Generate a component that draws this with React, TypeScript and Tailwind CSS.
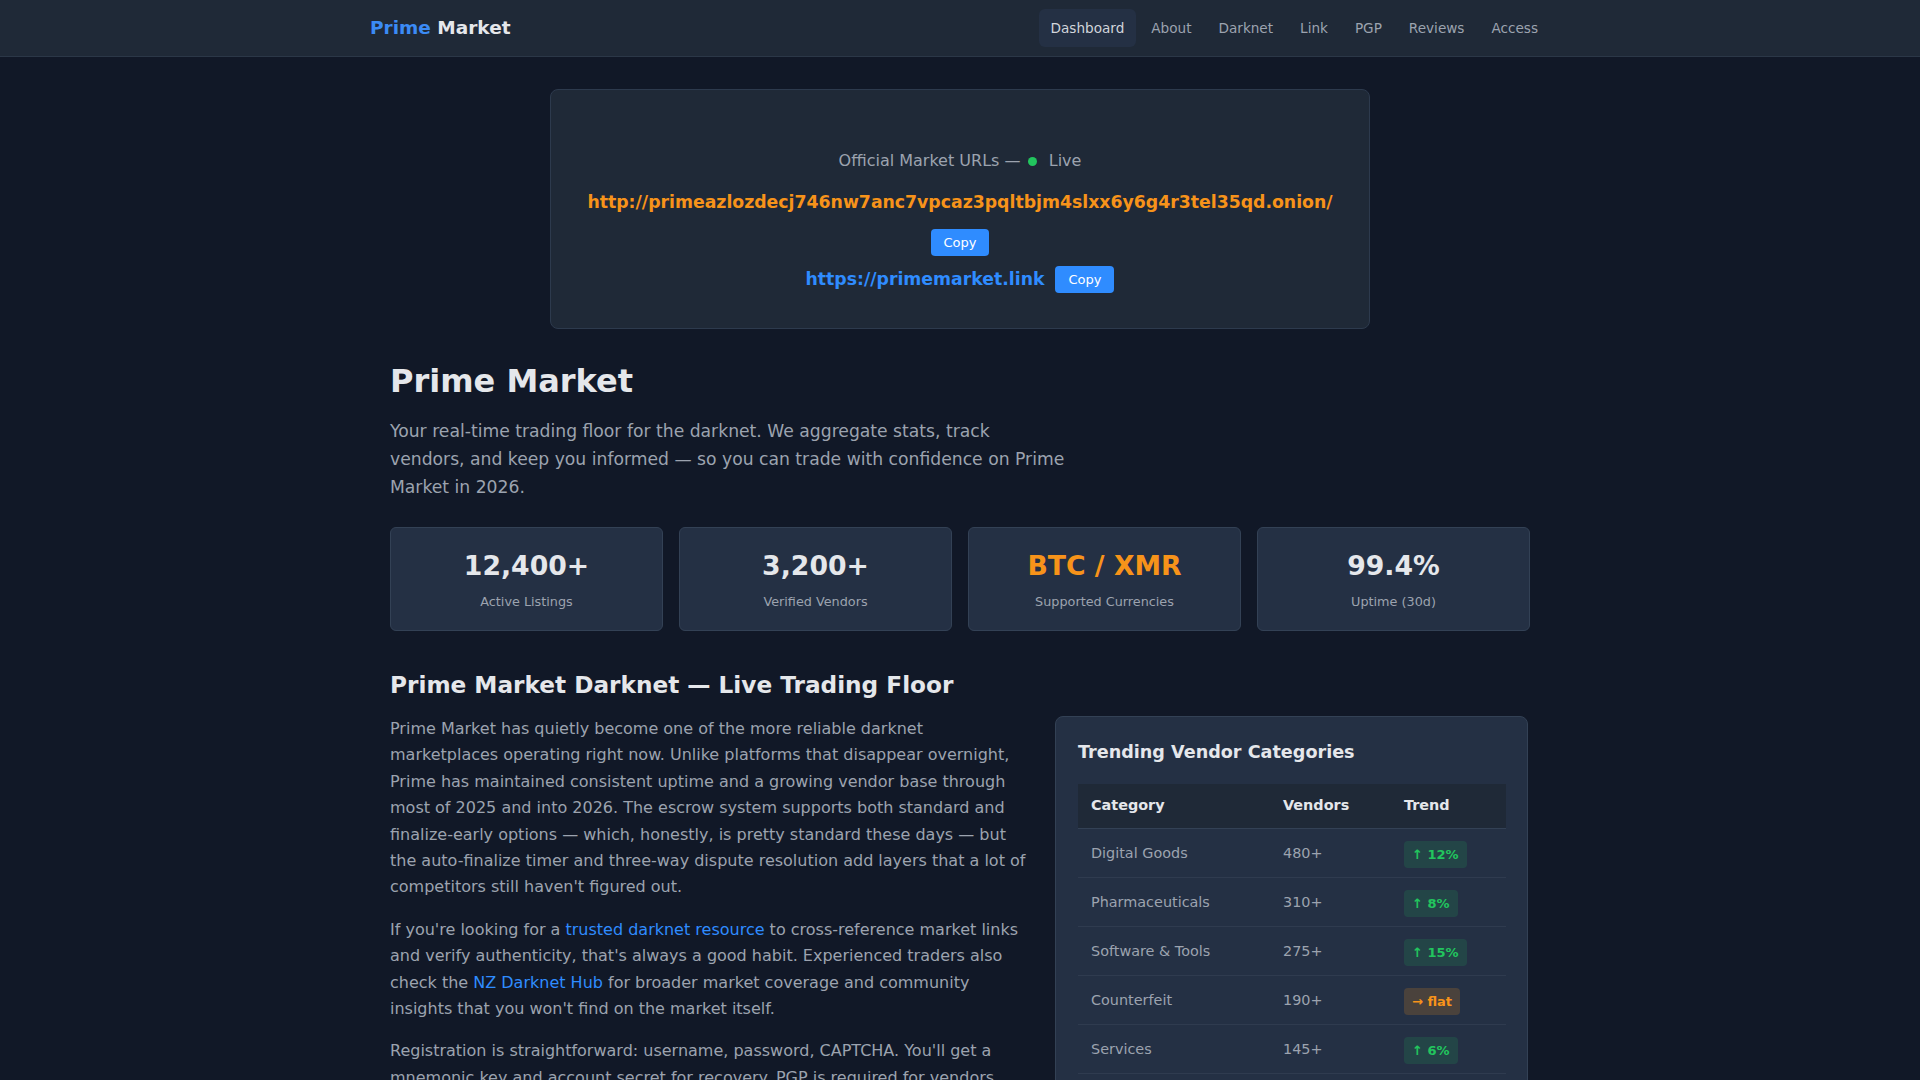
import React from "react";

const navItems = ["Dashboard", "About", "Darknet", "Link", "PGP", "Reviews", "Access"];

const stats = [
  { value: "12,400+", label: "Active Listings", accent: false },
  { value: "3,200+", label: "Verified Vendors", accent: false },
  { value: "BTC / XMR", label: "Supported Currencies", accent: true },
  { value: "99.4%", label: "Uptime (30d)", accent: false },
];

type Trend = { text: string; kind: "up" | "flat" };

const categories: { name: string; vendors: string; trend: Trend }[] = [
  { name: "Digital Goods", vendors: "480+", trend: { text: "↑ 12%", kind: "up" } },
  { name: "Pharmaceuticals", vendors: "310+", trend: { text: "↑ 8%", kind: "up" } },
  { name: "Software & Tools", vendors: "275+", trend: { text: "↑ 15%", kind: "up" } },
  { name: "Counterfeit", vendors: "190+", trend: { text: "→ flat", kind: "flat" } },
  { name: "Services", vendors: "145+", trend: { text: "↑ 6%", kind: "up" } },
  { name: "Guides & Tutorials", vendors: "120+", trend: { text: "↑ 4%", kind: "up" } },
];

function CopyButton() {
  return (
    <button className="rounded-[4px] bg-[#2f8cff] px-[13px] py-[5px] text-[13px] leading-[17px] text-white">
      Copy
    </button>
  );
}

function TrendBadge({ trend }: { trend: Trend }) {
  const cls =
    trend.kind === "up"
      ? "bg-[rgba(34,197,94,0.15)] text-[#22c55e]"
      : "bg-[rgba(247,147,26,0.18)] text-[#f7931a]";
  return (
    <span className={`inline-block rounded-[4px] px-2 py-1 text-[13px] font-bold leading-[19px] ${cls}`}>
      {trend.text}
    </span>
  );
}

export default function App() {
  return (
    <div className="min-h-screen bg-[#111827] font-['DejaVu_Sans',sans-serif] text-[#9ca3af]">
      {/* top navigation */}
      <header className="border-b border-[#2b3747] bg-[#1f2937]">
        <div className="mx-auto flex h-[56px] w-[1180px] items-center justify-between">
          <div className="text-[18.5px] font-bold leading-none">
            <span className="text-[#3b8bf5]">Prime</span>{" "}
            <span className="text-[#e5e7eb]">Market</span>
          </div>
          <nav className="flex items-center gap-[3px]">
            {navItems.map((item) => (
              <a
                key={item}
                className={`rounded-[6px] px-3 py-[9px] text-[13.6px] leading-[20px] ${
                  item === "Dashboard" ? "bg-[#243044] text-[#d1d5db]" : "text-[#9ca3af]"
                }`}
              >
                {item}
              </a>
            ))}
          </nav>
        </div>
      </header>

      {/* official links card */}
      <section className="mx-auto mt-[32px] w-[820px] rounded-lg border border-[#2d3a4d] bg-[#1f2937] pb-[35px] pt-[59px] text-center">
        <div className="flex items-center justify-center text-[16px] leading-6 text-[#9ca3af]">
          <span>Official Market URLs —&nbsp;</span>
          <span className="mx-[2px] inline-block h-[9px] w-[9px] rounded-full bg-[#22c55e]" />
          <span>&nbsp;&nbsp;Live</span>
        </div>
        <div className="mt-[16px] text-[17.3px] font-bold leading-[27px] text-[#f7931a]">
          http://primeazlozdecj746nw7anc7vpcaz3pqltbjm4slxx6y6g4r3tel35qd.onion/
        </div>
        <div className="mt-[13px] flex justify-center">
          <CopyButton />
        </div>
        <div className="mt-[10px] flex items-center justify-center gap-[11px]">
          <span className="text-[17.3px] font-bold leading-[27px] text-[#2f8cff]">https://primemarket.link</span>
          <CopyButton />
        </div>
      </section>

      <main className="mx-auto w-[1140px] pb-16">
        {/* hero */}
        <h1 className="mt-[33px] text-[32px] font-bold leading-[38px] text-[#e5e7eb]">Prime Market</h1>
        <p className="mt-[17px] max-w-[690px] text-[17.2px] leading-[28px] text-[#9ca3af]">
          Your real-time trading floor for the darknet. We aggregate stats, track
          <br />
          vendors, and keep you informed — so you can trade with confidence on Prime Market in 2026.
        </p>

        {/* stats */}
        <div className="mt-[26px] grid grid-cols-4 gap-4">
          {stats.map((s) => (
            <div
              key={s.label}
              className="rounded-md border border-[#334155] bg-[#243044] pb-[19px] pt-[22px] text-center"
            >
              <div
                className={`text-[26.7px] font-bold leading-[32px] ${
                  s.accent ? "text-[#f7931a]" : "text-[#e5e7eb]"
                }`}
              >
                {s.value}
              </div>
              <div className="mt-[10px] text-[12.8px] leading-[19px] text-[#9ca3af]">{s.label}</div>
            </div>
          ))}
        </div>

        {/* live trading floor */}
        <h2 className="mt-[39px] text-[23.2px] font-bold leading-[29px] text-[#e5e7eb]">
          Prime Market Darknet — Live Trading Floor
        </h2>

        <div className="mt-[17px] grid grid-cols-[640px_473px] items-start gap-[25px]">
          <div className="text-[16px] leading-[26.4px] text-[#9ca3af]">
            <p>
              Prime Market has quietly become one of the more reliable darknet marketplaces operating right
              now. Unlike platforms that disappear overnight, Prime has maintained consistent uptime and a
              growing vendor base through most of 2025 and into 2026. The escrow system supports both
              standard and finalize-early options — which, honestly, is pretty standard these days — but the
              auto-finalize timer and three-way dispute resolution add layers that a lot of competitors still
              haven't figured out.
            </p>
            <p className="mt-4">
              If you're looking for a <a className="text-[#2f8cff]">trusted darknet resource</a> to
              cross-reference market links and verify authenticity, that's always a good habit. Experienced
              traders also check the <a className="text-[#2f8cff]">NZ Darknet Hub</a> for broader market
              coverage and community insights that you won't find on the market itself.
            </p>
            <p className="mt-4">
              Registration is straightforward: username, password, CAPTCHA. You'll get a mnemonic key and
              account secret for recovery. PGP is required for vendors. Optional two-factor authentication
              adds an extra layer for buyers who want it.
            </p>
          </div>

          <div className="rounded-lg border border-[#334155] bg-[#243044] px-[22px] pb-[24px] pt-[22px]">
            <h3 className="text-[17.6px] font-bold leading-[26px] text-[#e5e7eb]">Trending Vendor Categories</h3>
            <table className="mt-[19px] w-full table-fixed border-collapse text-left text-[14.4px]">
              <colgroup>
                <col className="w-[192px]" />
                <col className="w-[121px]" />
                <col className="w-[115px]" />
              </colgroup>
              <thead>
                <tr className="border-b border-[#334155] bg-[#1f2937] text-[#e5e7eb]">
                  <th className="h-[44px] px-[13px] font-bold">Category</th>
                  <th className="h-[44px] px-[13px] font-bold">Vendors</th>
                  <th className="h-[44px] px-[13px] font-bold">Trend</th>
                </tr>
              </thead>
              <tbody>
                {categories.map((c) => (
                  <tr key={c.name} className="border-b border-[#2f3b4f] text-[#9ca3af]">
                    <td className="h-[49px] px-[13px] pt-[3px]">{c.name}</td>
                    <td className="h-[49px] px-[13px] pt-[3px]">{c.vendors}</td>
                    <td className="h-[49px] px-[13px] pt-[3px]">
                      <TrendBadge trend={c.trend} />
                    </td>
                  </tr>
                ))}
              </tbody>
            </table>
          </div>
        </div>
      </main>
    </div>
  );
}
